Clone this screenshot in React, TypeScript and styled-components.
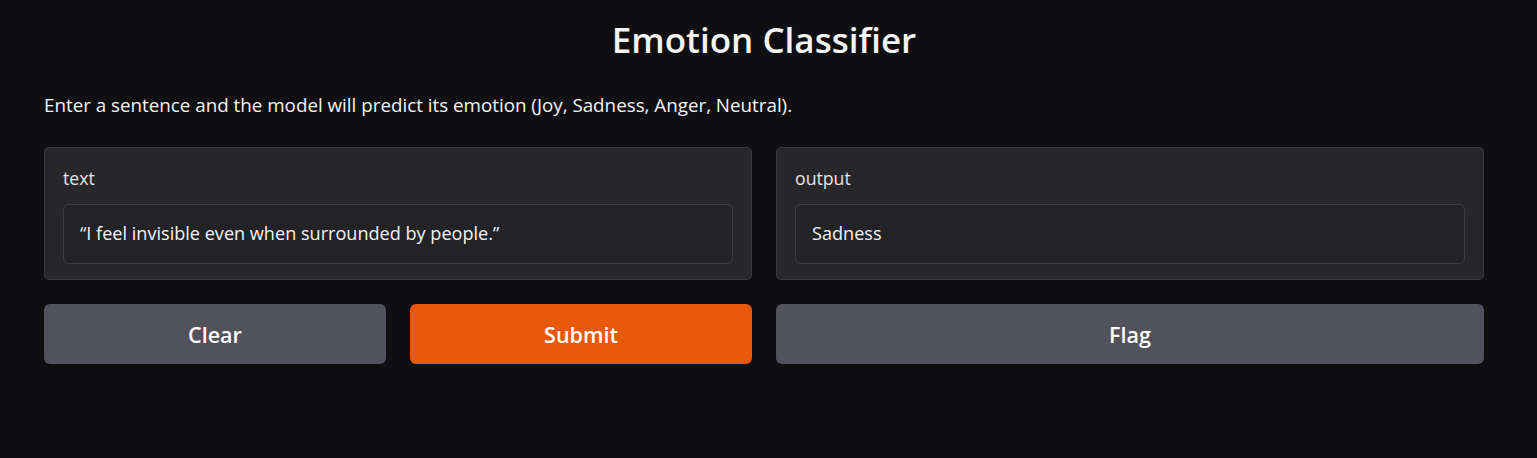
import React from "react";
import styled, { createGlobalStyle } from "styled-components";

const Global = createGlobalStyle`
  html, body { margin: 0; padding: 0; background: #0f0f11; }
  body { font-family: "Open Sans", "Noto Sans", sans-serif; color: #f4f4f5; }
  * { box-sizing: border-box; }
`;

const Page = styled.div`
  width: 1440px;
  margin-left: 44px;
  padding-top: 18px;
  display: flex;
  flex-direction: column;
`;

const Title = styled.h1`
  margin: 0;
  text-align: center;
  font-size: 35px;
  font-weight: 600;
  line-height: 44px;
  color: #f4f4f5;
`;

const Desc = styled.p`
  margin: 30px 0 0;
  font-size: 18.8px;
  line-height: 26px;
  color: #f4f4f5;
`;

const Grid = styled.div`
  margin-top: 29px;
  display: grid;
  grid-template-columns: 1fr 1fr;
  column-gap: 24px;
`;

const Column = styled.div`
  display: flex;
  flex-direction: column;
  gap: 24px;
`;

const Block = styled.div`
  background: #27272a;
  border: 1px solid #3b3b40;
  border-radius: 5px;
  padding: 19px 18px 15px;
  display: flex;
  flex-direction: column;
  gap: 15px;
`;

const Label = styled.span`
  font-size: 17.7px;
  line-height: 22px;
  color: #e4e4e7;
`;

const Field = styled.div`
  height: 60px;
  background: #232326;
  border: 1px solid #3d3d43;
  border-radius: 6px;
  padding: 0 16px 2px;
  display: flex;
  align-items: center;
  font-size: 18.1px;
  color: #f4f4f5;
`;

const ButtonRow = styled.div`
  display: flex;
  gap: 24px;
`;

const Button = styled.button<{ $primary?: boolean }>`
  flex: 1;
  height: 60px;
  border: none;
  border-radius: 6px;
  background: ${(p) => (p.$primary ? "#ea580c" : "#52525b")};
  color: #ffffff;
  font-family: inherit;
  font-size: 21.5px;
  font-weight: 600;
  cursor: pointer;
`;

export default function App() {
  return (
    <>
      <Global />
      <Page>
        <Title>Emotion Classifier</Title>
        <Desc>
          Enter a sentence and the model will predict its emotion (Joy, Sadness, Anger, Neutral).
        </Desc>
        <Grid>
          <Column>
            <Block>
              <Label>text</Label>
              <Field>“I feel invisible even when surrounded by people.”</Field>
            </Block>
            <ButtonRow>
              <Button>Clear</Button>
              <Button $primary>Submit</Button>
            </ButtonRow>
          </Column>
          <Column>
            <Block>
              <Label>output</Label>
              <Field>Sadness</Field>
            </Block>
            <ButtonRow>
              <Button>Flag</Button>
            </ButtonRow>
          </Column>
        </Grid>
      </Page>
    </>
  );
}
